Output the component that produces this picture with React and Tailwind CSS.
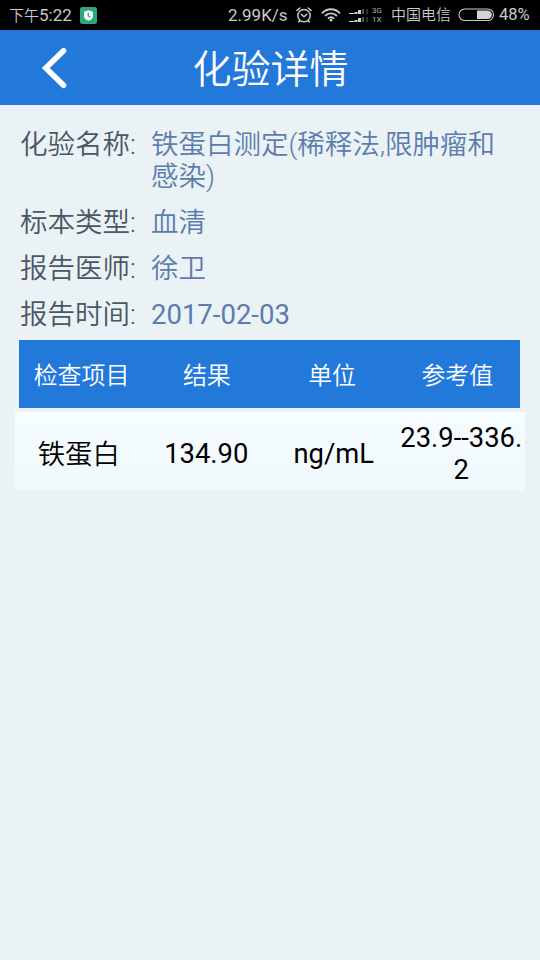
const details = [
    { label: '化验名称:', value: '铁蛋白测定(稀释法,限肿瘤和感染)' },
    { label: '标本类型:', value: '血清' },
    { label: '报告医师:', value: '徐卫' },
    { label: '报告时间:', value: '2017-02-03', numeric: true },
];

const columns = ['检查项目', '结果', '单位', '参考值'];

const results = [
    { name: '铁蛋白', result: '134.90', unit: 'ng/mL', range: '23.9--336.2' },
];

function ShieldIcon() {
    return (
        <svg className="w-[17px] h-[17px] ml-[7px]" viewBox="0 0 17 17">
            <rect width="17" height="17" rx="2.5" fill="#31a67c" />
            <path d="M8.5 3.200 12.900 4.800V9.600c0 2-1.700 3.200-4.400 4.200C5.800 12.800 4.100 11.600 4.100 9.600V4.800Z" fill="#f0fff8" />
            <path d="M8.300 6v2.800l1.900 1.200" stroke="#31a67c" strokeWidth="1.300" fill="none" />
        </svg>
    );
}

function AlarmIcon() {
    return (
        <svg className="w-4 h-4" viewBox="0 0 16 16" fill="none" stroke="#c9c9c9" strokeWidth="1.5" strokeLinecap="round">
            <circle cx="8" cy="8.600" r="6.200" />
            <path d="M1 3.400 3.800 1M15 3.400 12.200 1M5.300 7.300 8 9.700l2.800-2.400M3.800 13.500 2.700 15M12.200 13.500l1.100 1.500" />
        </svg>
    );
}

function WifiIcon() {
    return (
        <svg className="w-5 h-[14px]" viewBox="0 0 20 14" fill="none" stroke="#c9c9c9" strokeWidth="1.9">
            <path d="M1 5.300C6-.1 14-.1 19 5.300M4 8c3.400-3.500 8.600-3.500 12 0M6.900 10.600c1.800-1.800 4.400-1.800 6.200 0" />
            <circle cx="10" cy="12.200" r="1.400" fill="#c9c9c9" stroke="none" />
        </svg>
    );
}

function SignalIcon() {
    return (
        <svg className="w-5 h-[13px]" viewBox="0 0 20 13">
            {[5, 13].map(base => (
                <g key={base}>
                    <rect x="0" y={base - 1} width="5" height="1" fill="#d0d0d0" />
                    <rect x="5.500" y={base - 2} width="3" height="2" fill="#d0d0d0" />
                    <rect x="9" y={base - 4} width="3" height="4" fill="#d0d0d0" />
                    <rect x="13" y={base - 5} width="2" height="5" fill="#555" />
                    <rect x="17" y={base - 5} width="2" height="5" fill="#333" />
                </g>
            ))}
        </svg>
    );
}

function BatteryIcon() {
    return (
        <svg className="w-[37px] h-[14px]" viewBox="0 0 37 14">
            <rect x="1" y="1" width="34.500" height="11.500" rx="5.750" fill="none" stroke="#c9c9c9" strokeWidth="1.100" />
            <path d="M19 2.400h10.500a4.350 4.350 0 0 1 0 8.700H19Z" fill="#d6d2d2" />
        </svg>
    );
}

function StatusBar() {
    return (
        <div className="h-[30px] bg-black text-[#c9c9c9] text-[15px] flex items-center pl-[9px] whitespace-nowrap">
            <span className="text-[17px] w-[64px] pt-px"><span className="text-[15px] font-[350]">下午</span>5:22</span>
            <ShieldIcon />
            <span className="ml-[131px] text-[17px] w-[59px] pt-px">2.99K/s</span>
            <span className="ml-[9px]"><AlarmIcon /></span>
            <span className="ml-[9px]"><WifiIcon /></span>
            <span className="ml-2"><SignalIcon /></span>
            <span className="ml-[3px] flex flex-col text-[8px] leading-[9px] w-[11px] text-[#b0b0b0]">
                <span>3G</span>
                <span>1X</span>
            </span>
            <span className="ml-[8px] w-[60px] pt-px font-[350]">中国电信</span>
            <span className="ml-[7px]"><BatteryIcon /></span>
            <span className="ml-1 text-[16.5px] pt-px">48%</span>
        </div>
    );
}

export default function App() {
    return (
        <div className="w-[540px] h-[960px] overflow-hidden bg-[#eaf2f5] font-['Roboto','Noto_Sans_CJK_SC',sans-serif]">
            <StatusBar />

            <header className="h-[75px] bg-[#2279da] grid grid-cols-[108px_1fr_108px] items-center">
                <svg className="w-[26px] h-[42px] ml-[41px]" viewBox="0 0 26 42" fill="none">
                    <path d="M22.500 3.800 4.800 21 22.500 38.200" stroke="#fff" strokeWidth="5.600" strokeLinecap="round" />
                </svg>
                <h1 className="pt-1 pl-px text-center text-white text-[39px] leading-[46px] font-[350]">化验详情</h1>
            </header>

            <dl className="pt-6 pl-5 pr-10 flex flex-col gap-[14px] text-[27.5px] leading-[32px]">
                {details.map(item => (
                    <div key={item.label} className="flex">
                        <dt className="w-[131px] shrink-0 text-[#4b5563] font-[350]">{item.label}</dt>
                        <dd className={`text-[#5b7cad] break-all ${item.numeric ? 'font-normal' : 'font-[350]'}`}>{item.value}</dd>
                    </div>
                ))}
            </dl>

            <section className="mt-[9px] px-[15px]">
                <div className="ml-1 mr-[5px] h-[68px] pt-[3px] bg-[#2279da] text-white text-2xl grid grid-cols-4 items-center text-center font-[350]">
                    {columns.map(col => (
                        <span key={col}>{col}</span>
                    ))}
                </div>
                {results.map(row => (
                    <div
                        key={row.name}
                        className="mt-1 h-[79px] pt-[5px] bg-linear-to-b from-[#f6fdff] to-[#f0f8fb] text-black text-[27.4px] leading-[32px] grid grid-cols-4 items-center text-center"
                    >
                        <span className="font-[350] pt-0.5">{row.name}</span>
                        <span>{row.result}</span>
                        <span>{row.unit}</span>
                        <span className="break-all">{row.range}</span>
                    </div>
                ))}
            </section>
        </div>
    );
}
